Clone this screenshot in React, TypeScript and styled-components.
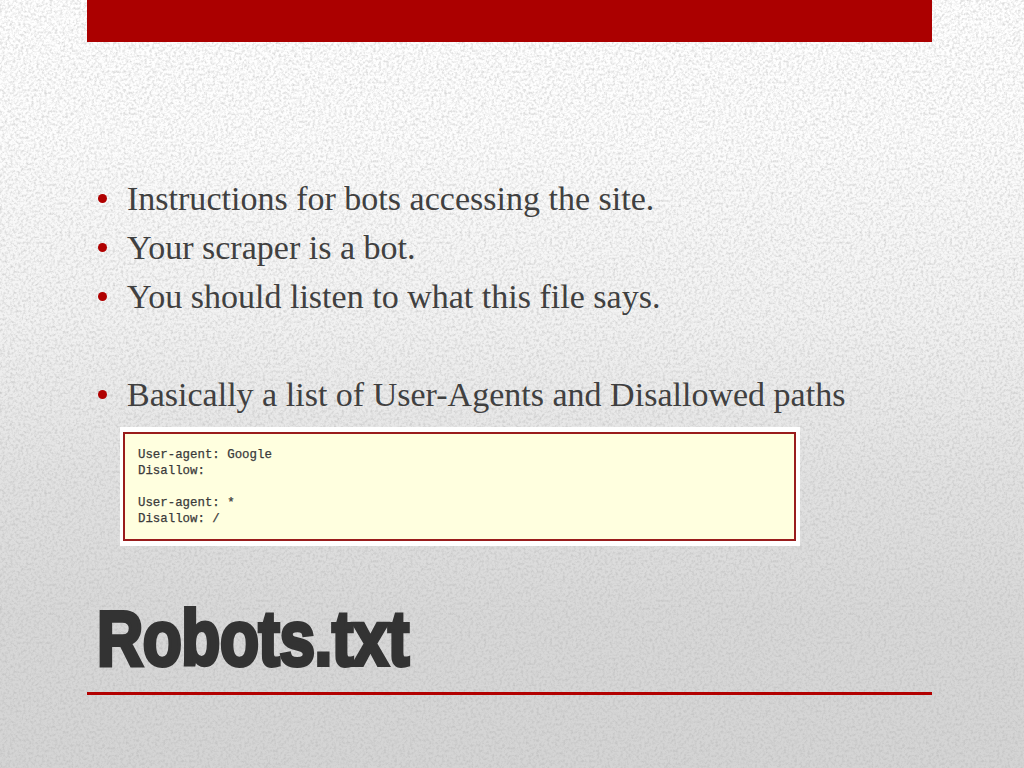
import React from "react";
import styled, { createGlobalStyle } from "styled-components";

const noise = `url("data:image/svg+xml,${encodeURIComponent(
  `<svg xmlns='http://www.w3.org/2000/svg' width='400' height='400'><filter id='n' x='0' y='0' width='100%' height='100%'><feTurbulence type='fractalNoise' baseFrequency='0.38' numOctaves='4' stitchTiles='stitch'/><feColorMatrix values='0 0 0 0 0.45  0 0 0 0 0.45  0 0 0 0 0.45  1.1 0 0 0 -0.45'/></filter><rect width='400' height='400' filter='url(#n)'/></svg>`
)}")`;

const Global = createGlobalStyle`
  html, body { margin: 0; padding: 0; background: #fff; }
`;

const Slide = styled.div`
  width: 1024px;
  height: 768px;
  overflow: hidden;
  box-sizing: border-box;
  padding: 0 92px 0 87px;
  display: flex;
  flex-direction: column;
  background-image: ${noise}, linear-gradient(180deg, #ffffff 0%, #fdfdfd 18%, #f2f2f2 42%, #e2e2e2 62%, #d8d8d8 80%, #d4d4d4 100%);
`;

const TopBar = styled.div`
  height: 42px;
  flex: none;
  background: #ab0000;
`;

const BulletList = styled.ul`
  list-style: none;
  margin: 132px 0 0;
  padding: 0 0 0 10px;
  font-family: "Liberation Serif", "Times New Roman", serif;
  font-size: 34px;
  line-height: 49px;
  letter-spacing: 0.01px;
  color: #404040;
`;

const Bullet = styled.li<{ $gap?: boolean }>`
  position: relative;
  white-space: nowrap;
  height: 49px;
  padding-left: 30px;
  margin-top: ${(p) => (p.$gap ? "49px" : "0")};

  &::before {
    content: "";
    position: absolute;
    left: 1px;
    top: 20px;
    width: 9px;
    height: 9px;
    border-radius: 50%;
    background: #b00000;
  }
`;

const SnippetFrame = styled.div`
  width: 680px;
  height: 119px;
  margin: 8px 0 0 33px;
  flex: none;
  box-sizing: border-box;
  padding: 5px 4px 5px 3px;
  background: #ffffff;
`;

const Snippet = styled.pre`
  margin: 0;
  height: 100%;
  box-sizing: border-box;
  padding: 13px 0 0 13px;
  background: #ffffdf;
  border: 2px solid #991c1c;
  font-family: "Liberation Mono", "Courier New", monospace;
  font-size: 12.4px;
  line-height: 16px;
  color: #3a3a3a;
  -webkit-text-stroke: 0.25px #3a3a3a;
`;

const TitleRow = styled.div`
  margin: 50px 0 0 10px;
  height: 85px;
  flex: none;
`;

const Title = styled.h1`
  display: inline-block;
  margin: 0;
  font-family: "Liberation Sans", sans-serif;
  font-weight: 700;
  font-size: 77px;
  line-height: 85px;
  letter-spacing: -0.5px;
  color: #333333;
  -webkit-text-stroke: 4px #333333;
  white-space: nowrap;
  transform: scaleX(0.83);
  transform-origin: 0 50%;
`;

const Rule = styled.div`
  height: 3px;
  flex: none;
  margin-top: 11px;
  background: #b20000;
`;

export default function App() {
  return (
    <Slide>
      <Global />
      <TopBar />
      <BulletList>
        <Bullet>Instructions for bots accessing the site.</Bullet>
        <Bullet>Your scraper is a bot.</Bullet>
        <Bullet>You should listen to what this file says.</Bullet>
        <Bullet $gap>Basically a list of User-Agents and Disallowed paths</Bullet>
      </BulletList>
      <SnippetFrame>
        <Snippet>{`User-agent: Google
Disallow:

User-agent: *
Disallow: /`}</Snippet>
      </SnippetFrame>
      <TitleRow>
        <Title>Robots.txt</Title>
      </TitleRow>
      <Rule />
    </Slide>
  );
}
